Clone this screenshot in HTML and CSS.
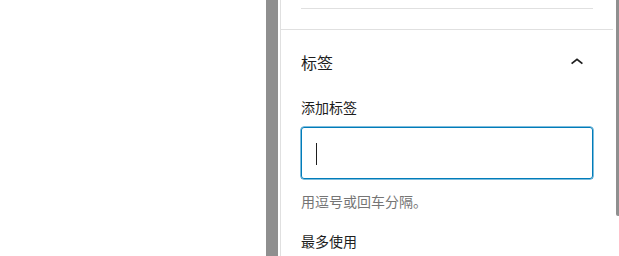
FILE: index.html
```html
<!DOCTYPE html>
<html>
<head>
	<meta charset="utf-8">
	<title>标签</title>
	<link rel="stylesheet" href="styles.css">
</head>
<body>
	<div class="canvas"></div>
	<div class="resizer"></div>
	<div class="sidebar">
		<div class="prev-panel">
			<div class="prev-rule"></div>
		</div>

		<div class="panel">
			<div class="panel-header">
				<span class="panel-title">标签</span>
				<svg class="chevron" width="24" height="24" viewBox="0 0 24 24">
					<path d="M6.6 13.6L12 9.3l5.4 4.3" fill="none" stroke="#1e1e1e" stroke-width="1.8"/>
				</svg>
			</div>

			<div class="field-label">添加标签</div>
			<div class="token-field">
				<span class="caret"></span>
			</div>
			<div class="help">用逗号或回车分隔。</div>

			<div class="most-used">最多使用</div>
		</div>
	</div>
	<div class="scroll-track">
		<div class="scroll-thumb"></div>
	</div>
</body>
</html>
```

FILE: styles.css
```css
/* general */
body {
	margin: 0;
	height: 256px;
	overflow: hidden;
	display: flex;
	background: #fff;
	font-family: "Noto Sans CJK SC", "Noto Sans", sans-serif;
	color: #1e1e1e;
}

/* editor canvas and resize handle */
.canvas {
	width: 266px;
	flex: none;
}
.resizer {
	width: 12px;
	flex: none;
	background-color: #8f8f8f;
	margin-right: 2px;
}

/* sidebar */
.sidebar {
	width: 332px;
	flex: none;
	border-left: 1px solid #e0e0e0;
}
.prev-panel {
	height: 29px;
	padding: 0 20px;
	border-bottom: 1px solid #e0e0e0;
}
.prev-rule {
	height: 8px;
	border-bottom: 1px solid #e0e0e0;
}
.panel {
	padding: 0 20px;
}
.panel-header {
	display: flex;
	align-items: center;
	justify-content: space-between;
	padding-top: 20px;
	height: 24px;
}
.panel-title {
	font-size: 16px;
	line-height: 24px;
}
.chevron {
	margin-right: 4px;
	margin-top: -1px;
}
.field-label {
	margin-top: 23px;
	font-size: 14px;
	line-height: 20px;
}
.token-field {
	margin-top: 10px;
	height: 50px;
	border: 1px solid #007cba;
	box-shadow: 0 0 0 0.5px #007cba;
	border-radius: 3px;
	display: flex;
	align-items: center;
	padding-left: 14px;
}
.caret {
	width: 1px;
	height: 22px;
	background: #1e1e1e;
	margin-top: 2px;
}
.help {
	margin-top: 12px;
	font-size: 14px;
	line-height: 20px;
	color: #757575;
}
.most-used {
	margin-top: 20px;
	font-size: 14px;
	line-height: 20px;
}

/* scrollbar */
.scroll-track {
	margin-left: 3px;
	width: 4px;
	flex: none;
}
.scroll-thumb {
	height: 216px;
	background-color: #8f8f8f;
	border-radius: 0 0 2px 2px;
}
```
